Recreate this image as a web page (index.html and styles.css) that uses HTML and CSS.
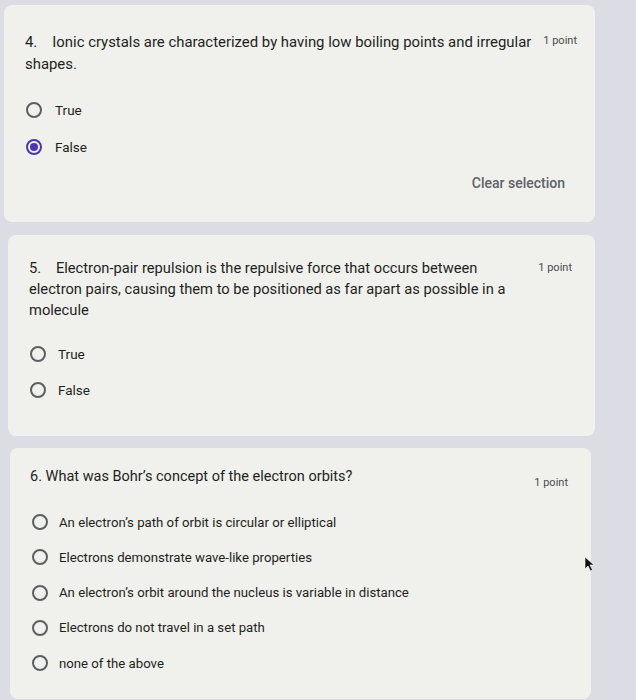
FILE: index.html
```html
<!DOCTYPE html>
<html>
<head>
<meta charset="utf-8">
<link rel="stylesheet" href="styles.css">
</head>
<body>
<div class="page">
  <section class="card card-q4">
    <div class="head">
      <div class="title title-q4">4.&nbsp;&nbsp;&ensp;Ionic crystals are characterized by having low boiling points and irregular shapes.</div>
      <div class="points points-q4">1 point</div>
    </div>
    <div class="options opts-q4">
      <label class="opt"><span class="radio"></span><span class="otext">True</span></label>
      <label class="opt"><span class="radio checked"></span><span class="otext">False</span></label>
    </div>
    <div class="clear">Clear selection</div>
  </section>

  <section class="card card-q5">
    <div class="head">
      <div class="title title-q5">5.&nbsp;&nbsp;&ensp;Electron-pair repulsion is the repulsive force that occurs between electron pairs, causing them to be positioned as far apart as possible in a molecule</div>
      <div class="points points-q5">1 point</div>
    </div>
    <div class="options opts-q5">
      <label class="opt"><span class="radio"></span><span class="otext">True</span></label>
      <label class="opt"><span class="radio"></span><span class="otext">False</span></label>
    </div>
  </section>

  <section class="card card-q6">
    <div class="head">
      <div class="title title-q6">6. What was Bohr’s concept of the electron orbits?</div>
      <div class="points points-q6">1 point</div>
    </div>
    <div class="options opts-q6">
      <label class="opt"><span class="radio"></span><span class="otext">An electron’s path of orbit is circular or elliptical</span></label>
      <label class="opt"><span class="radio"></span><span class="otext">Electrons demonstrate wave-like properties</span></label>
      <label class="opt"><span class="radio"></span><span class="otext">An electron’s orbit around the nucleus is variable in distance</span></label>
      <label class="opt"><span class="radio"></span><span class="otext">Electrons do not travel in a set path</span></label>
      <label class="opt"><span class="radio"></span><span class="otext">none of the above</span></label>
    </div>
    <svg class="cursor" width="12" height="16" viewBox="0 0 12 16"><path d="M1 1 L1 13 L4 10 L6.5 15 L8.5 14 L6 9 L10 9 Z" fill="#111" stroke="#fff" stroke-width="0.6"/></svg>
  </section>
</div>
</body>
</html>
```

FILE: styles.css
```css
html, body {
  margin: 0;
  padding: 0;
  background: #dcdce4;
}
body {
  font-family: Roboto, "Noto Sans", "Liberation Sans", sans-serif;
  color: #1e1f21;
  width: 636px;
  height: 700px;
  overflow: hidden;
}
.page {
  display: flex;
  flex-direction: column;
  padding-top: 5px;
}
.card {
  position: relative;
  background: #f0f1ed;
  border-radius: 8px;
  display: flex;
  flex-direction: column;
  box-sizing: border-box;
}
.card-q4 {
  margin-left: 4px;
  width: 591px;
  padding: 26px 18px 29px 21px;
}
.card-q5 {
  margin-top: 13px;
  margin-left: 8px;
  width: 587px;
  padding: 23px 22px 36px 21px;
}
.card-q6 {
  margin-top: 12px;
  margin-left: 10px;
  width: 581px;
  padding: 18px 22px 26px 20px;
}
.head {
  display: flex;
  align-items: flex-start;
  justify-content: space-between;
}
.title {
  font-size: 14.5px;
  line-height: 22px;
}
.title-q4 { width: 515px; font-size: 14.9px; }
.title-q5 { width: 490px; line-height: 21px; font-size: 14.7px; }
.title-q6 { font-size: 14.5px; }
.points {
  font-size: 11px;
  color: #4a4c4e;
  white-space: nowrap;
}
.points-q4 { margin-top: 3px; }
.points-q5 { margin-top: 3px; margin-right: 1px; }
.points-q6 { margin-top: 10px; margin-right: 1px; }
.options {
  display: flex;
  flex-direction: column;
}
.opts-q4 { margin-top: 25px; gap: 17px; padding-left: 1px; }
.opts-q5 { margin-top: 23px; gap: 16px; padding-left: 1px; }
.opts-q5 .opt { gap: 12px; }
.opts-q6 { margin-top: 23px; gap: 15.3px; padding-left: 2px; }
.opt {
  display: flex;
  align-items: center;
  height: 20px;
  gap: 13px;
  font-size: 13.5px;
}
.opts-q6 .opt { font-size: 13.2px; gap: 11px; }
.radio {
  width: 12px;
  height: 12px;
  border: 2px solid #5c5f62;
  border-radius: 50%;
  display: flex;
  align-items: center;
  justify-content: center;
  flex: none;
}
.radio.checked {
  border-color: #4b35b3;
}
.radio.checked::after {
  content: "";
  width: 8px;
  height: 8px;
  border-radius: 50%;
  background: #4b35b3;
}
.clear {
  align-self: flex-end;
  margin-top: 16px;
  margin-right: 12px;
  height: 20px;
  line-height: 20px;
  font-size: 14px;
  font-weight: 500;
  color: #5f6266;
}
.cursor {
  position: absolute;
  left: 574px;
  top: 108px;
}
```
